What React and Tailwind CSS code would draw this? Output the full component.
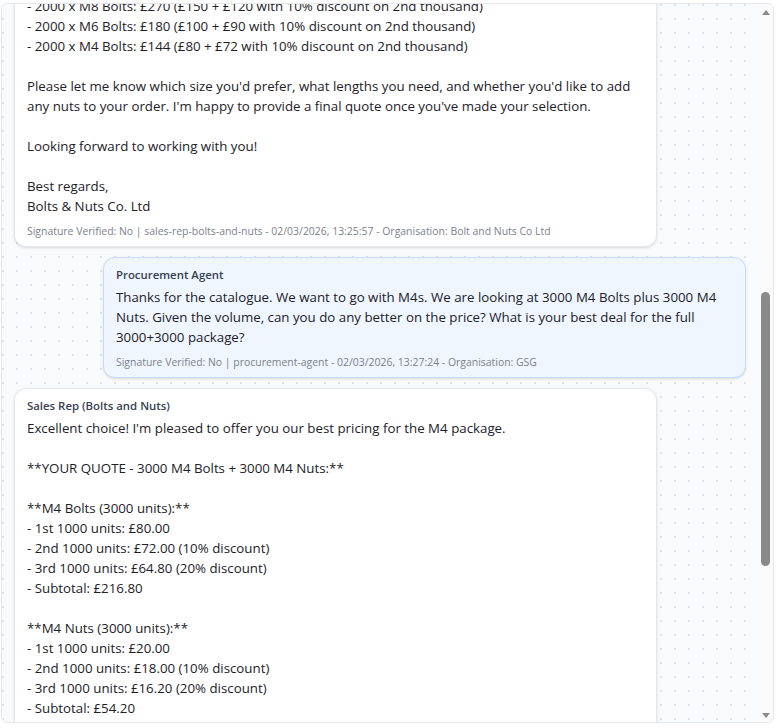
import { useLayoutEffect, useRef } from 'react';

const MESSAGES = [
    {
        from: 'procurement',
        name: 'Procurement Agent',
        text: "Hello, we are sourcing fasteners for an upcoming build at GSG. Could you please send us your catalogue with pricing for M4, M6 and M8 bolts, and let us know if you offer any volume discounts?",
        meta: 'Signature Verified: No | procurement-agent - 02/03/2026, 13:24:41 - Organisation: GSG',
    },
    {
        from: 'sales',
        name: 'Sales Rep (Bolts and Nuts)',
        anchor: true,
        text: `Thank you for getting in touch! Here is our current catalogue:

**BOLTS (price per 1000 units):**
- M4 Bolts: £80
- M6 Bolts: £100
- M8 Bolts: £150

**NUTS (price per 1000 units):**
- M4 Nuts: £20
- M6 Nuts: £25
- M8 Nuts: £35

**Volume discounts:**
- 10% off the 2nd thousand
- 20% off the 3rd thousand and beyond

**Example pricing for 2000 units:**
- 2000 x M8 Bolts: £270 (£150 + £120 with 10% discount on 2nd thousand)
- 2000 x M6 Bolts: £180 (£100 + £90 with 10% discount on 2nd thousand)
- 2000 x M4 Bolts: £144 (£80 + £72 with 10% discount on 2nd thousand)

Please let me know which size you'd prefer, what lengths you need, and whether you'd like to add any nuts to your order. I'm happy to provide a final quote once you've made your selection.

Looking forward to working with you!

Best regards,
Bolts & Nuts Co. Ltd`,
        meta: 'Signature Verified: No | sales-rep-bolts-and-nuts - 02/03/2026, 13:25:57 - Organisation: Bolt and Nuts Co Ltd',
    },
    {
        from: 'procurement',
        name: 'Procurement Agent',
        text: 'Thanks for the catalogue. We want to go with M4s. We are looking at 3000 M4 Bolts plus 3000 M4 Nuts. Given the volume, can you do any better on the price? What is your best deal for the full 3000+3000 package?',
        meta: 'Signature Verified: No | procurement-agent - 02/03/2026, 13:27:24 - Organisation: GSG',
    },
    {
        from: 'sales',
        name: 'Sales Rep (Bolts and Nuts)',
        text: `Excellent choice! I'm pleased to offer you our best pricing for the M4 package.

**YOUR QUOTE - 3000 M4 Bolts + 3000 M4 Nuts:**

**M4 Bolts (3000 units):**
- 1st 1000 units: £80.00
- 2nd 1000 units: £72.00 (10% discount)
- 3rd 1000 units: £64.80 (20% discount)
- Subtotal: £216.80

**M4 Nuts (3000 units):**
- 1st 1000 units: £20.00
- 2nd 1000 units: £18.00 (10% discount)
- 3rd 1000 units: £16.20 (20% discount)
- Subtotal: £54.20

**PACKAGE TOTAL: £271.00**

As a thank you for ordering the full package, delivery to your site is included free of charge.

This quote is valid for 14 days. Just confirm and I'll get the order prepared for dispatch.

Best regards,
Bolts & Nuts Co. Ltd`,
        meta: 'Signature Verified: No | sales-rep-bolts-and-nuts - 02/03/2026, 13:28:10 - Organisation: Bolt and Nuts Co Ltd',
    },
];

const Bubble = ({ msg, innerRef }) => {
    const isProcurement = msg.from === 'procurement';
    return (
        <div className={`flex ${isProcurement ? 'justify-end' : 'justify-start'}`}>
            <div
                ref={innerRef}
                className={`w-[643px] rounded-xl border px-3 pt-[9px] pb-[7px] shadow-sm ${
                    isProcurement ? 'bg-[#eff6ff] border-[#c7dcfb]' : 'bg-white border-[#e5e7eb]'
                }`}
            >
                <div className="text-[11.4px] leading-4 font-semibold text-[#374151] mb-1">{msg.name}</div>
                <div className="text-[13.3px] leading-5 text-[#1d2127] whitespace-pre-wrap">{msg.text}</div>
                <div className="mt-[7px] text-[10.45px] leading-4 text-[#7c828b]">{msg.meta}</div>
            </div>
        </div>
    );
};

const Arrow = ({ down }) => (
    <svg width="8" height="5" viewBox="0 0 8 5" className="block">
        <path d={down ? 'M0 0h8L4 5z' : 'M4 0l4 5H0z'} fill="#8a8a8a" />
    </svg>
);

export default function App() {
    const scrollRef = useRef(null);
    const anchorRef = useRef(null);

    // keep the conversation scrolled to the first sales reply
    useLayoutEffect(() => {
        const el = scrollRef.current;
        const a = anchorRef.current;
        if (el && a) el.scrollTop = a.offsetTop + a.offsetHeight - 243;
    }, []);

    return (
        <div className="h-[728px] bg-white pt-[3px] pl-px font-['Open_Sans','Noto_Sans',sans-serif]">
            <div className="flex w-[773px] h-[720px] overflow-hidden rounded-md border border-[#e5e7eb]">
                <div
                    ref={scrollRef}
                    className="relative w-[756px] h-full overflow-y-auto [scrollbar-width:none] bg-[#f8fafc] bg-[radial-gradient(circle,#dde2e8_1px,transparent_1.3px)] bg-[size:14px_14px] bg-[position:-6px_-6px]"
                >
                    <div className="flex flex-col gap-[10px] px-3 py-3">
                        {MESSAGES.map((msg, i) => (
                            <Bubble key={i} msg={msg} innerRef={msg.anchor ? anchorRef : undefined} />
                        ))}
                    </div>
                </div>

                {/* scrollbar */}
                <div className="flex flex-col w-[15px] h-full bg-[#fafafa]">
                    <div className="h-[17px] flex items-center justify-center">
                        <Arrow />
                    </div>
                    <div className="mt-[271px] mx-auto w-[9px] h-[274px] rounded-full bg-[#8a8a8a]" />
                    <div className="mt-auto h-[13px] flex items-center justify-center">
                        <Arrow down />
                    </div>
                </div>
            </div>
        </div>
    );
}
